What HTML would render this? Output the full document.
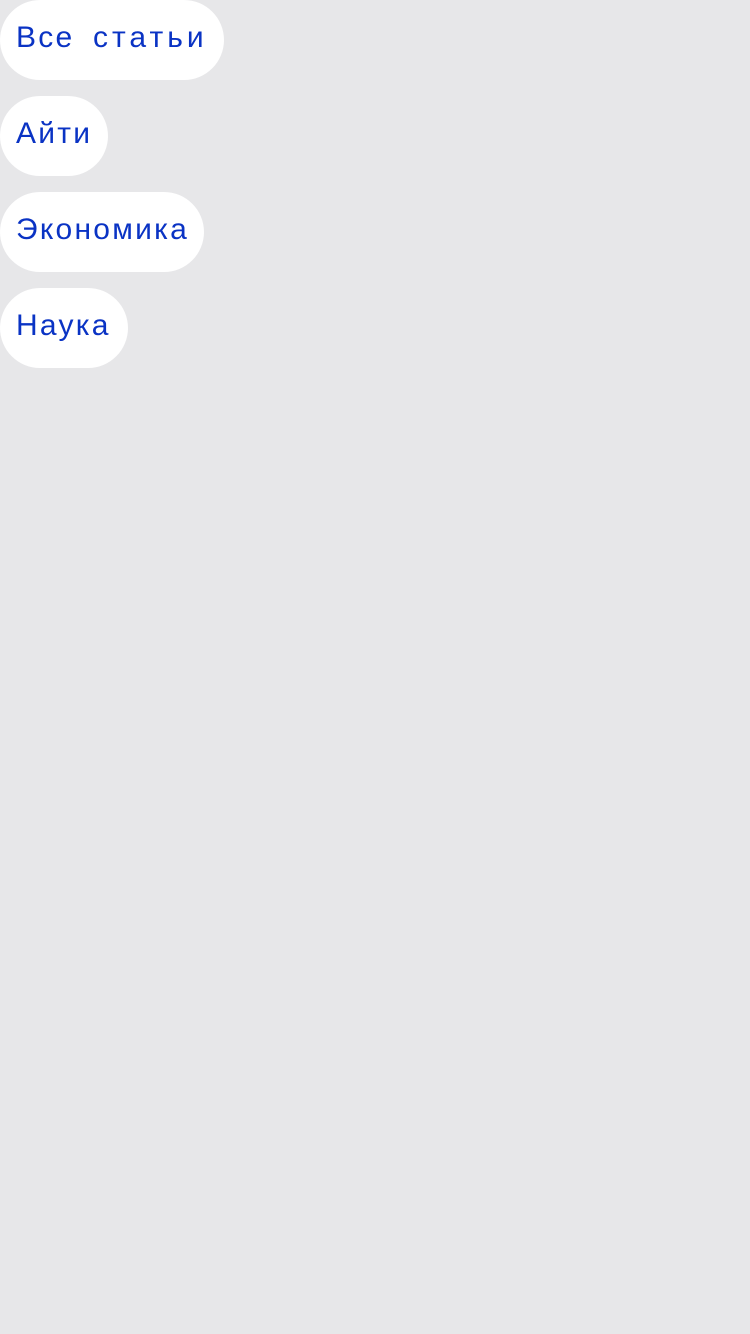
<!DOCTYPE html>
<html><head><meta charset="utf-8"><style>
html,body{margin:0;padding:0;background:#e7e7e9;width:750px;height:1334px;overflow:hidden}
.p{position:absolute;left:0;height:80px;border-radius:40px;background:#fff;box-sizing:border-box;padding-left:16px;line-height:76px;font-family:"Liberation Sans",sans-serif;font-size:30px;letter-spacing:2.25px;word-spacing:8px;color:#0a33c4;white-space:nowrap}
</style></head><body>
<div class="p" style="top:0;width:224px">Все <span style="letter-spacing:4px">статьи</span></div>
<div class="p" style="top:96px;width:108px">Айти</div>
<div class="p" style="top:192px;width:204px">Экономика</div>
<div class="p" style="top:288px;width:128px">Наука</div>
</body></html>
